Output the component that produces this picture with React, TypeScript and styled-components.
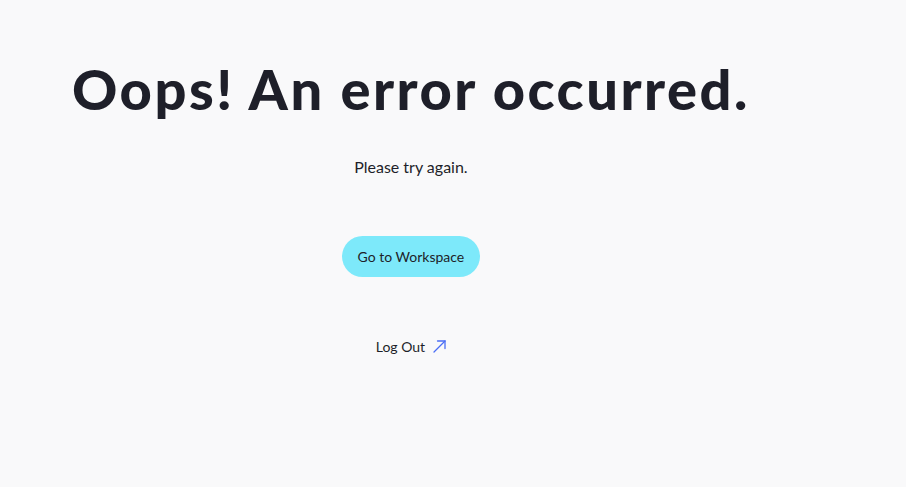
import React from "react";
import styled, { createGlobalStyle } from "styled-components";

const GlobalStyle = createGlobalStyle`
  html, body {
    margin: 0;
    padding: 0;
    background: #f9f9fa;
  }
  body {
    font-family: Lato, "Liberation Sans", sans-serif;
    color: #1e1f29;
  }
`;

const Page = styled.div`
  min-height: 487px;
  padding: 54px 0 0 72px;
  box-sizing: border-box;
`;

const Content = styled.div`
  display: inline-flex;
  flex-direction: column;
  align-items: center;
`;

const Heading = styled.h1`
  margin: 0;
  font-family: Lato, sans-serif;
  font-weight: 900;
  font-size: 56px;
  line-height: 70px;
  letter-spacing: 2.5px;
  color: #1e1f29;
  white-space: nowrap;
`;

const Message = styled.p`
  margin: 33px 0 0;
  font-size: 16px;
  line-height: 20px;
  color: #1e1f29;
`;

const PrimaryButton = styled.button`
  margin-top: 59px;
  height: 41px;
  padding: 0 16px;
  border: none;
  border-radius: 21px;
  background: #7de9fa;
  color: #1e1f29;
  font-family: Lato, sans-serif;
  font-size: 14px;
  cursor: pointer;
`;

const LinkButton = styled.a`
  margin-top: 61px;
  display: flex;
  align-items: center;
  gap: 8px;
  font-size: 14px;
  color: #1e1f29;
  text-decoration: none;
  cursor: pointer;
`;

const ArrowIcon = () => (
  <svg width="13" height="13" viewBox="0 0 13 13" fill="none" stroke="#4b6ef5" strokeWidth="1.3" strokeLinecap="round">
    <path d="M1 12 L12 1" />
    <path d="M4.5 1 H12 V8.5" />
  </svg>
);

export default function App() {
  return (
    <>
      <GlobalStyle />
      <Page>
        <Content>
          <Heading>Oops! An error occurred.</Heading>
          <Message>Please try again.</Message>
          <PrimaryButton>Go to Workspace</PrimaryButton>
          <LinkButton href="#">
            Log Out
            <ArrowIcon />
          </LinkButton>
        </Content>
      </Page>
    </>
  );
}
